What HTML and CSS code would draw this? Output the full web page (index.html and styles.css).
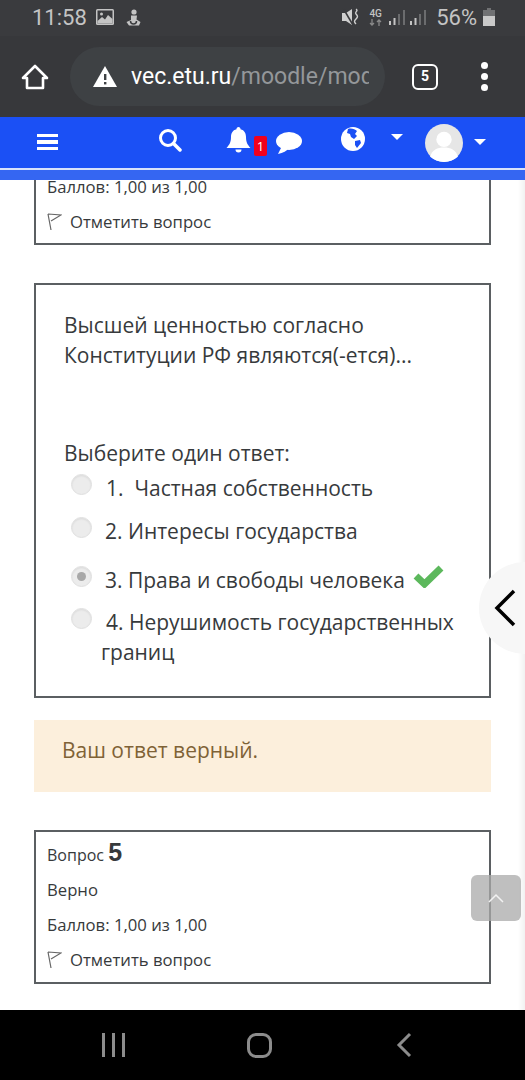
FILE: index.html
```html
<!DOCTYPE html>
<html lang="ru">
  <head>
    <meta charset="UTF-8" />
    <meta name="viewport" content="width=device-width, initial-scale=1.0" />
    <title>Вопрос</title>
    <link rel="stylesheet" href="styles.css">
  </head>
  <body>
    <div class="phone">
      <!-- status bar -->
      <div class="status">
        <span class="time">11:58</span>
        <svg class="st-pic" width="18" height="16" viewBox="0 0 18 16"><rect width="18" height="16" rx="1.500" fill="#c4c4c4"/><rect x="1.500" y="1.500" width="15" height="13" fill="#3a3b3e"/><path d="M1.500 14.500 V12 L6 8 L9 10.500 L12 6 L16.500 10 V14.500Z" fill="#c4c4c4"/><circle cx="5.500" cy="5" r="1.500" fill="#c4c4c4"/></svg>
        <svg class="st-app" width="15" height="17" viewBox="0 0 15 17"><circle cx="8" cy="3" r="2.600" fill="#c4c4c4"/><path d="M5 6.500h6l-.5 4 4 2.500-1.500 3.500H3L.5 13l4.500-2z" fill="#c4c4c4"/><path d="M4.500 12a3 3 0 0 0 6 0" fill="none" stroke="#3a3b3e" stroke-width="1.500"/></svg>
        <span class="st-space"></span>
        <svg class="st-mute" width="18" height="18" viewBox="0 0 18 18"><path d="M0 5h4l6-4v16l-6-4H0z" fill="#cfcfcf"/><path d="M1 0l10 17" stroke="#3a3b3e" stroke-width="1.600"/><path d="M14 1c3 2-2 3 0 5s2 3 0 5-2 3 0 5" stroke="#cfcfcf" stroke-width="1.400" fill="none"/></svg>
        <span class="st-net">4G<svg width="13" height="7" viewBox="0 0 13 7"><path d="M3 0v6M1 4l2 2 2-2M10 7V1M8 3l2-2 2 2" stroke="#8a8a8a" stroke-width="1.300" fill="none"/></svg></span>
        <svg class="st-sig" width="16" height="17" viewBox="0 0 16 17"><rect x="0" y="12" width="2" height="4" fill="#c4c4c4"/><rect x="4.500" y="9" width="2" height="7" fill="#c4c4c4"/><rect x="9" y="5" width="2" height="11" fill="#6b6c6e"/><rect x="14" y="1" width="2" height="15" fill="#6b6c6e"/></svg>
        <svg class="st-sig" width="16" height="17" viewBox="0 0 16 17"><rect x="0" y="12" width="2" height="4" fill="#c4c4c4"/><rect x="4.500" y="9" width="2" height="7" fill="#c4c4c4"/><rect x="9" y="5" width="2" height="11" fill="#6b6c6e"/><rect x="14" y="1" width="2" height="15" fill="#6b6c6e"/></svg>
        <span class="pct">56%</span>
        <svg class="st-bat" width="12" height="18" viewBox="0 0 12 18"><path d="M4 0h4v2h4v16H0V2h4z" fill="#707173"/><rect y="8" width="12" height="10" fill="#c9c9c9"/></svg>
      </div>

      <!-- browser toolbar -->
      <div class="toolbar">
        <svg class="home" width="28" height="28" viewBox="0 0 28 28"><path d="M14 3 L26 15 H22 V25 H6 V15 H2 Z" fill="none" stroke="#fff" stroke-width="2.600" stroke-linejoin="round"/></svg>
        <div class="url">
          <svg class="warn" width="24" height="22" viewBox="0 0 24 22"><path d="M12 0 L24 21 H0 Z" fill="#fff"/><rect x="11" y="8" width="2.400" height="6" fill="#3e4144"/><rect x="11" y="16" width="2.400" height="2.400" fill="#3e4144"/></svg>
          <div class="url-text"><span class="host">vec.etu.ru</span>/moodle/mod</div>
        </div>
        <div class="tabs">5</div>
        <div class="dots"><i></i><i></i><i></i></div>
      </div>

      <!-- moodle navbar -->
      <div class="navbar">
        <div class="navbar-row">
          <div class="burger"><i></i><i></i><i></i></div>
          <svg class="search" width="24" height="24" viewBox="0 0 24 24"><circle cx="10" cy="10" r="7.500" fill="none" stroke="#fff" stroke-width="3"/><path d="M15.500 15.500 L22 22" stroke="#fff" stroke-width="3.500" stroke-linecap="round"/></svg>
          <svg class="bell" width="25" height="26" viewBox="0 0 25 26"><path d="M12.500 0c1.300 0 2 1 2 2.200C18.500 3 20 6.500 20 10c0 6 2 8 4.500 11H.5C3 18 5 16 5 10c0-3.500 1.500-7 5.500-7.800C10.500 1 11.200 0 12.500 0z" fill="#fff"/><path d="M9.500 22.500h6a3 3 0 0 1-6 0z" fill="#fff"/></svg>
          <div class="badge">1</div>
          <svg class="chat" width="26" height="22" viewBox="0 0 26 22"><ellipse cx="13" cy="9" rx="13" ry="9" fill="#fff"/><path d="M6 14 L2 22 C7 21 11 19 13 16 Z" fill="#fff"/></svg>
          <svg class="globe" width="24" height="24" viewBox="0 0 24 24"><circle cx="12" cy="12" r="12" fill="#fff"/><path d="M7 2c3-1 7 0 9 2l-2 3 2 2-3 3-3-2-1-3-3-1zM14 14l5-1 1 3-4 5-2-3z" fill="#1b50f5"/></svg>
          <div class="caret caret-lang"></div>
          <div class="avatar">
            <svg width="38" height="38" viewBox="0 0 37 37"><circle cx="18.500" cy="18.500" r="18.500" fill="#e6e6e6"/><circle cx="18.500" cy="15" r="7.500" fill="#fff"/><path d="M5 32c2-7 7-9 13.500-9S30 25 32 32c-3.500 3-8 5-13.500 5S8.500 35 5 32z" fill="#fff"/></svg>
          </div>
          <div class="caret caret-user"></div>
        </div>
        <div class="navbar-strip"></div>
      </div>

      <!-- page -->
      <div class="content">
        <div class="card card-cut">
          <div class="line grade">Баллов: 1,00 из 1,00</div>
          <div class="line flag-row">
            <svg class="flag" width="15" height="18" viewBox="0 0 15 18"><path d="M1 1 L14 2 L4 8 M1 1 L4 17" fill="none" stroke="#666" stroke-width="1.200"/></svg>
            Отметить вопрос
          </div>
        </div>

        <div class="card card-question">
          <div class="qtext">Высшей ценностью согласно Конституции РФ являются(-ется)...</div>
          <div class="prompt">Выберите один ответ:</div>
          <div class="answers">
            <div class="answer a1">
              <span class="radio"></span>
              <div class="label label-wide">1.&nbsp; Частная собственность</div>
            </div>
            <div class="answer a2">
              <span class="radio"></span>
              <div class="label">2. Интересы государства</div>
            </div>
            <div class="answer a3">
              <span class="radio checked"></span>
              <div class="label">3. Права и свободы человека</div>
              <svg class="tick" width="31" height="24" viewBox="0 0 31 24"><path d="M3 12 L11.500 20 L28 4" fill="none" stroke="#5cb85c" stroke-width="7"/></svg>
            </div>
            <div class="answer a4">
              <span class="radio"></span>
              <div class="label label-wrap">4. Нерушимость государственных границ</div>
            </div>
          </div>
        </div>

        <div class="notice">Ваш ответ верный.</div>

        <div class="card card-info">
          <div class="qno">Вопрос <b>5</b></div>
          <div class="line state">Верно</div>
          <div class="line grade">Баллов: 1,00 из 1,00</div>
          <div class="line flag-row">
            <svg class="flag" width="15" height="18" viewBox="0 0 15 18"><path d="M1 1 L14 2 L4 8 M1 1 L4 17" fill="none" stroke="#666" stroke-width="1.200"/></svg>
            Отметить вопрос
          </div>
        </div>

        <!-- floating stuff -->
        <div class="edge"></div>
        <div class="side-handle">
          <svg width="24" height="38" viewBox="0 0 24 38"><path d="M21 2 L4 19 L21 36" fill="none" stroke="#000" stroke-width="3.500"/></svg>
        </div>
        <div class="to-top">
          <svg width="16" height="10" viewBox="0 0 16 10"><path d="M1 9 L8 2 L15 9" fill="none" stroke="#f2f2f2" stroke-width="1.500"/></svg>
        </div>
      </div>

      <!-- android nav -->
      <div class="softkeys">
        <div class="key-recent"><i></i><i></i><i></i></div>
        <div class="key-home"></div>
        <svg class="key-back" width="16" height="26" viewBox="0 0 16 26"><path d="M14 2 L3 13 L14 24" fill="none" stroke="#8c8c8c" stroke-width="3"/></svg>
      </div>
    </div>
  </body>
</html>
```

FILE: styles.css
```css
* {
  box-sizing: border-box;
}
html,
body {
  margin: 0;
  padding: 0;
}
.phone {
  width: 525px;
  height: 1080px;
  display: flex;
  flex-direction: column;
  overflow: hidden;
  font-family: "Open Sans", sans-serif;
  color: #373a3c;
  background: #fff;
}

/* status bar */
.status {
  height: 36px;
  flex: none;
  display: flex;
  align-items: center;
  padding: 0 30px 2px 32px;
  background: #3a3b3e;
  color: #c4c4c4;
  font-family: Roboto, sans-serif;
}
.time {
  font-size: 22px;
}
.st-pic {
  margin-left: 9px;
}
.st-app {
  margin-left: 12px;
}
.st-space {
  flex: 1;
}
.st-net {
  display: flex;
  flex-direction: column;
  align-items: center;
  margin: 0 7px 0 9px;
  font-size: 10px;
  line-height: 10px;
  font-weight: 500;
}
.st-sig {
  margin-right: 5px;
}
.pct {
  font-size: 22px;
  margin: 0 6px 0 5px;
}

/* browser toolbar */
.toolbar {
  height: 81px;
  flex: none;
  display: flex;
  align-items: center;
  background: #37383b;
}
.home {
  margin-left: 21px;
}
.url {
  width: 315px;
  height: 59px;
  margin-left: 21px;
  padding: 0 16px 0 23px;
  display: flex;
  align-items: center;
  border-radius: 30px;
  background: #3e4144;
}
.warn {
  flex: none;
}
.url-text {
  margin-left: 14px;
  font-family: Roboto, sans-serif;
  font-size: 23px;
  color: #94979a;
  white-space: nowrap;
  overflow: hidden;
}
.host {
  color: #fff;
}
.tabs {
  width: 26px;
  height: 26px;
  margin-left: 27px;
  border: 2.500px solid #fff;
  border-radius: 6px;
  color: #fff;
  font: bold 14px/21px Roboto, sans-serif;
  text-align: center;
}
.dots {
  margin-left: 43px;
  display: flex;
  flex-direction: column;
  gap: 4px;
}
.dots i {
  display: block;
  width: 7px;
  height: 7px;
  border-radius: 50%;
  background: #fff;
}

/* navbar */
.navbar {
  flex: none;
  background: #1b50f5;
}
.navbar-row {
  height: 51px;
  display: flex;
  align-items: center;
  border-bottom: 1px solid #1b50f5;
}
.burger {
  margin-left: 37px;
  display: flex;
  flex-direction: column;
  gap: 3px;
}
.burger i {
  display: block;
  width: 21px;
  height: 3.500px;
  background: #fff;
}
.search {
  margin-left: 100px;
  margin-top: -4px;
}
.bell {
  margin-left: 44px;
  margin-top: -4px;
}
.badge {
  width: 13px;
  height: 20px;
  margin: 7px 0 0 3px;
  border-radius: 2px;
  background: #f2001d;
  color: #fff;
  font-size: 13px;
  line-height: 20px;
  text-align: center;
}
.chat {
  margin-left: 9px;
  margin-top: 2px;
}
.globe {
  margin-left: 39px;
  margin-top: -6px;
}
.caret {
  width: 0;
  height: 0;
  border-left: 6px solid transparent;
  border-right: 6px solid transparent;
  border-top: 6px solid #fff;
}
.caret-lang {
  margin-left: 26px;
  margin-top: -11px;
}
.caret-user {
  margin-left: 11px;
}
.avatar {
  width: 38px;
  height: 38px;
  margin-left: 22px;
  margin-top: 2px;
}
.navbar-strip {
  height: 12px;
  border-top: 2px solid #d8e2fb;
  background: #3566f2;
}

/* page */
.content {
  flex: 1;
  position: relative;
  overflow: hidden;
  padding: 0 34px;
}
.card {
  width: 457px;
  border: 2px solid #5b5f62;
  background: #fff;
  padding: 0 11px;
}
.line {
  font-size: 16.700px;
  line-height: 24px;
  color: #373a3c;
}
.card-cut {
  height: 79px;
  margin-top: -14px;
  padding-top: 7px;
}
.flag-row {
  display: flex;
  align-items: center;
  margin-top: 11px;
}
.flag {
  margin-right: 8px;
}
.card-question {
  height: 415px;
  margin-top: 38px;
  padding: 25px 28px;
  font-size: 21px;
}
.qtext {
  line-height: 30px;
  height: 128px;
}
.prompt {
  line-height: 30px;
}
.answers {
  font-size: 21px;
  margin-top: 5px;
}
.answer {
  display: flex;
  align-items: flex-start;
  padding-left: 7px;
  line-height: 30px;
}
.radio {
  flex: none;
  width: 21px;
  height: 21px;
  margin-top: 1px;
  border-radius: 50%;
  background: #ececec;
  border: 1px solid #e0e0e0;
  box-shadow: inset 0 1px 2px rgba(0, 0, 0, 0.08);
}
.radio.checked {
  position: relative;
}
.radio.checked::after {
  content: "";
  position: absolute;
  left: 5px;
  top: 5px;
  width: 9px;
  height: 9px;
  border-radius: 50%;
  background: #a8a8a8;
}
.label {
  margin-left: 13px;
  white-space: nowrap;
}
.label-wide {
  margin-left: 14px;
}
.label-wrap {
  margin-left: 9px;
  text-indent: 5px;
  white-space: normal;
}
.a2 {
  margin-top: 13px;
}
.a3 {
  margin-top: 19px;
}
.a4 {
  margin-top: 12px;
}
.tick {
  margin: -1px 0 0 8px;
}
.notice {
  height: 72px;
  margin-top: 22px;
  padding: 0 28px;
  background: #fcefdc;
  color: #7f6236;
  font-size: 21px;
  line-height: 60px;
}
.card-info {
  height: 154px;
  margin-top: 38px;
  padding-top: 5px;
}
.qno {
  font-size: 16px;
  line-height: 30px;
}
.qno b {
  font-family: "Liberation Sans", sans-serif;
  font-size: 25px;
}
.state {
  margin-top: 8px;
}
.grade {
  margin: 0;
}
.card-info .grade {
  margin-top: 11px;
}
.edge {
  position: absolute;
  right: 0;
  top: 0;
  bottom: 0;
  width: 7px;
  background: linear-gradient(to right, #fff, #f1f1f1);
}
.side-handle {
  position: absolute;
  left: 479px;
  top: 382px;
  width: 92px;
  height: 92px;
  border-radius: 50%;
  background: #f7f7f7;
  display: flex;
  align-items: center;
  padding-left: 14px;
}
.to-top {
  position: absolute;
  left: 471px;
  top: 695px;
  width: 50px;
  height: 46px;
  border-radius: 6px;
  background: rgba(170, 170, 170, 0.75);
  display: flex;
  align-items: center;
  justify-content: center;
}

/* android keys */
.softkeys {
  height: 70px;
  flex: none;
  background: #000;
  display: flex;
  align-items: center;
  padding-left: 102px;
}
.key-recent {
  display: flex;
  gap: 7px;
}
.key-recent i {
  display: block;
  width: 3px;
  height: 24px;
  background: #8c8c8c;
}
.key-home {
  width: 25px;
  height: 25px;
  margin-left: 122px;
  border: 3px solid #8c8c8c;
  border-radius: 9px;
}
.key-back {
  margin-left: 124px;
}
```
